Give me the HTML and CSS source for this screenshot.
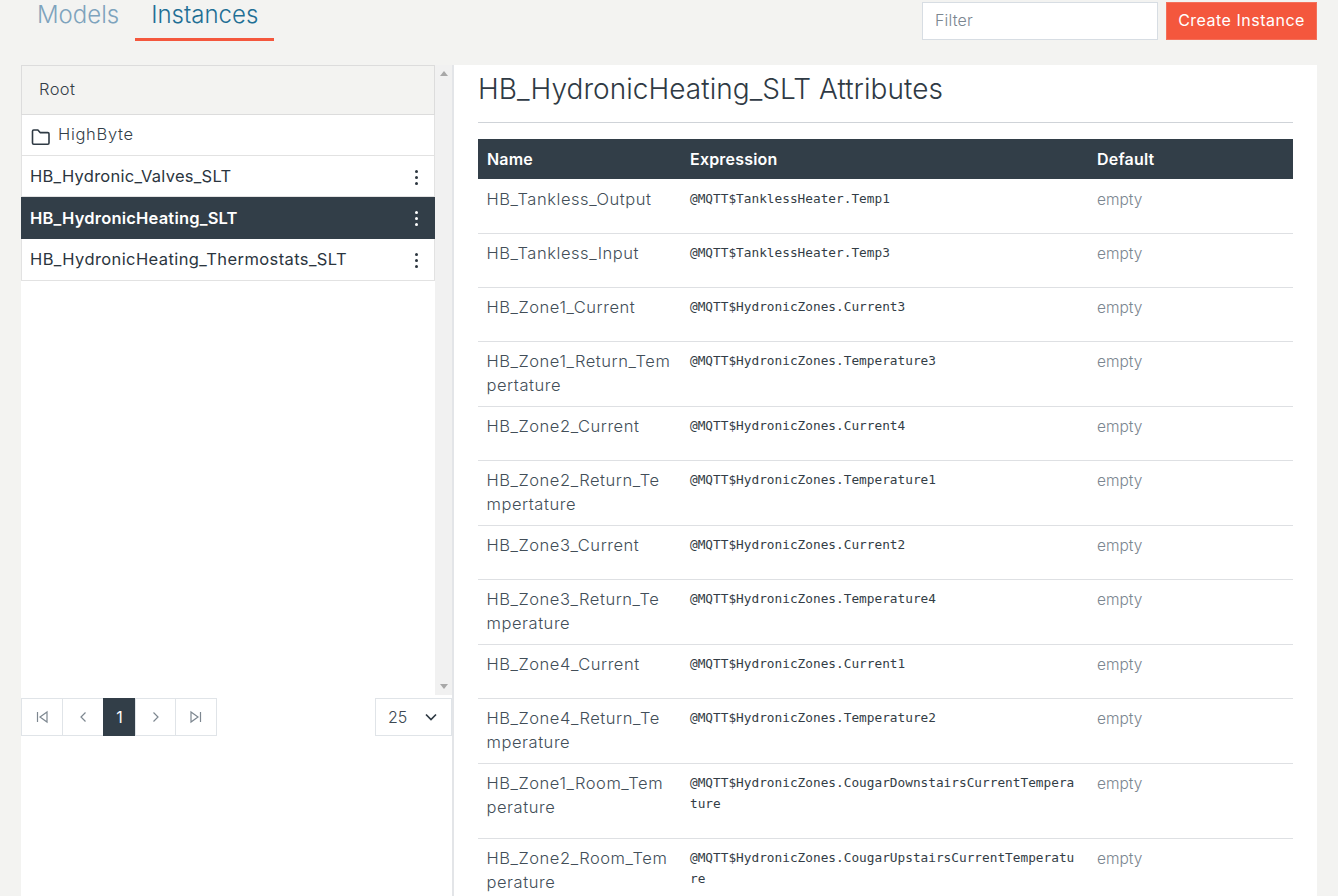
FILE: index.html
```html
<!DOCTYPE html>
<html lang="en">
<head>
<meta charset="utf-8">
<title>Instances</title>
<link rel="stylesheet" href="styles.css">
</head>
<body>
<div class="page">
  <header class="topbar">
    <nav class="tabs">
      <a class="tab">Models</a>
      <a class="tab tab-active">Instances</a>
    </nav>
    <div class="actions">
      <input class="filter" type="text" placeholder="Filter">
      <button class="create">Create Instance</button>
    </div>
  </header>
  <main class="content">
    <aside class="sidebar">
      <div class="tree-wrap">
        <div class="tree">
          <div class="tree-root">Root</div>
          <div class="tree-folder">
            <svg class="folder-icon" width="20" height="18" viewBox="0 0 20 18" fill="none" stroke="#2f3a44" stroke-width="1.6" stroke-linejoin="round"><path d="M1.5 15V3.2c0-.7.5-1.2 1.2-1.2h4.2l2.2 2.6h7.7c.7 0 1.2.5 1.2 1.2V15c0 .7-.5 1.2-1.2 1.2H2.7c-.7 0-1.2-.5-1.2-1.2z"/></svg>
            <span>HighByte</span>
          </div>
          <div class="tree-item"><span>HB_Hydronic_Valves_SLT</span><i class="kebab"><b></b><b></b><b></b></i></div>
          <div class="tree-item tree-item-active"><span>HB_HydronicHeating_SLT</span><i class="kebab"><b></b><b></b><b></b></i></div>
          <div class="tree-item tree-item-tall"><span>HB_HydronicHeating_Thermostats_SLT</span><i class="kebab"><b></b><b></b><b></b></i></div>
        </div>
        <div class="scrollbar"><span class="arrow-up"></span><span class="arrow-down"></span></div>
      </div>
      <div class="pager-row">
        <div class="pager">
          <span class="page-btn pb-wide"><svg width="14" height="14" viewBox="0 0 14 14" fill="none" stroke="#7d8790" stroke-width="1.2"><path d="M2.5 2v10M12 2 5 7l7 5z"/></svg></span>
          <span class="page-btn pb-wide"><svg width="10" height="12" viewBox="0 0 10 12" fill="none" stroke="#7d8790" stroke-width="1.2"><path d="M7.5 1.5 3 6l4.500 4.500"/></svg></span>
          <span class="page-btn page-current">1</span>
          <span class="page-btn pb-mid"><svg width="10" height="12" viewBox="0 0 10 12" fill="none" stroke="#7d8790" stroke-width="1.2"><path d="M2.500 1.500 7 6l-4.500 4.500"/></svg></span>
          <span class="page-btn pb-wide"><svg width="14" height="14" viewBox="0 0 14 14" fill="none" stroke="#7d8790" stroke-width="1.2"><path d="M11.500 2v10M2 2l7 5-7 5z"/></svg></span>
        </div>
        <div class="size-select"><span>25</span><svg width="12" height="8" viewBox="0 0 12 8" fill="none" stroke="#2f3a44" stroke-width="1.7"><path d="M1 1.500 6 6.500l5-5"/></svg></div>
      </div>
    </aside>
    <section class="detail">
      <h1 class="title">HB_HydronicHeating_SLT Attributes</h1>
      <hr class="rule">
      <table class="attrs">
        <colgroup><col class="c-name"><col class="c-expr"><col class="c-def"></colgroup>
        <thead><tr><th>Name</th><th>Expression</th><th>Default</th></tr></thead>
        <tbody>
          <tr><td class="name">HB_Tankless_Output</td><td class="expr">@MQTT$TanklessHeater.Temp1</td><td class="def">empty</td></tr>
          <tr><td class="name">HB_Tankless_Input</td><td class="expr">@MQTT$TanklessHeater.Temp3</td><td class="def">empty</td></tr>
          <tr><td class="name">HB_Zone1_Current</td><td class="expr">@MQTT$HydronicZones.Current3</td><td class="def">empty</td></tr>
          <tr><td class="name">HB_Zone1_Return_Tem<br>pertature</td><td class="expr">@MQTT$HydronicZones.Temperature3</td><td class="def">empty</td></tr>
          <tr><td class="name">HB_Zone2_Current</td><td class="expr">@MQTT$HydronicZones.Current4</td><td class="def">empty</td></tr>
          <tr><td class="name">HB_Zone2_Return_Te<br>mpertature</td><td class="expr">@MQTT$HydronicZones.Temperature1</td><td class="def">empty</td></tr>
          <tr><td class="name">HB_Zone3_Current</td><td class="expr">@MQTT$HydronicZones.Current2</td><td class="def">empty</td></tr>
          <tr><td class="name">HB_Zone3_Return_Te<br>mperature</td><td class="expr">@MQTT$HydronicZones.Temperature4</td><td class="def">empty</td></tr>
          <tr><td class="name">HB_Zone4_Current</td><td class="expr">@MQTT$HydronicZones.Current1</td><td class="def">empty</td></tr>
          <tr><td class="name">HB_Zone4_Return_Te<br>mperature</td><td class="expr">@MQTT$HydronicZones.Temperature2</td><td class="def">empty</td></tr>
          <tr><td class="name">HB_Zone1_Room_Tem<br>perature</td><td class="expr">@MQTT$HydronicZones.CougarDownstairsCurrentTemperature</td><td class="def">empty</td></tr>
          <tr><td class="name">HB_Zone2_Room_Tem<br>perature</td><td class="expr">@MQTT$HydronicZones.CougarUpstairsCurrentTemperature</td><td class="def">empty</td></tr>
        </tbody>
      </table>
    </section>
  </main>
</div>
</body>
</html>
```
FILE: styles.css
```css
* { box-sizing: border-box; }
html, body { margin: 0; padding: 0; height: 100%; overflow: hidden; }
body { background: #f3f3f1; color: #3c4852; font-family: Inter, "Noto Sans", sans-serif; font-weight: 300; }
.page { height: 896px; display: flex; flex-direction: column; padding: 0 21px; overflow: hidden; }

.topbar { height: 65px; flex: none; display: flex; justify-content: space-between; align-items: flex-start; }
.tabs { display: flex; }
.tab { height: 41px; padding: 0 16px; font-size: 24px; line-height: 30px; color: #7ea3bd; border-bottom: 3px solid transparent; }
.tab-active { color: #1f6f95; border-bottom-color: #f4573d; }
.actions { display: flex; gap: 8px; padding-top: 2px; }
.filter { width: 236px; height: 38px; border: 1px solid #d7dde3; background: #fff; padding: 0 12px 2px; font: 300 16px Inter, sans-serif; letter-spacing: .2px; color: #3c4852; }
.filter::placeholder { color: #7b8690; opacity: 1; }
.create { width: 151px; height: 38px; border: 1px solid #f4705a; background: #f4573d; color: #fff; font: 400 16px Inter, sans-serif; letter-spacing: .5px; padding: 0 0 2px; }

.content { flex: 1; display: flex; min-height: 0; }
.sidebar { width: 433px; flex: none; background: #fff; border-right: 2px solid #e3e5e8; display: flex; flex-direction: column; }
.tree-wrap { height: 630px; display: flex; flex: none; }
.tree { width: 414px; flex: none; }
.tree-root { height: 50px; background: #f3f3f1; border: 1px solid #dcdcdc; padding: 0 0 2px 17px; display: flex; align-items: center; font-size: 16.500px; letter-spacing: .4px; color: #333e48; }
.tree-folder { height: 41px; border: 1px solid #e2e2e2; border-top: 0; padding: 0 0 2px 9px; display: flex; align-items: center; gap: 7px; font-size: 16.500px; letter-spacing: .7px; color: #333e48; }
.folder-icon { flex: none; margin-top: 5px; }
.tree-item { height: 41px; border: 1px solid #e2e2e2; border-top: 0; padding: 0 16px 0 8px; display: flex; align-items: center; justify-content: space-between; font-size: 16.500px; font-weight: 400; letter-spacing: .27px; color: #2b353e; }
.tree-item-tall { height: 42px; padding-bottom: 2px; letter-spacing: .4px; }
.tree-item-active { height: 42px; background: #323e48; border-color: #323e48; color: #fff; font-weight: 600; letter-spacing: .2px; }
.kebab { display: flex; flex-direction: column; gap: 3px; margin-top: 2px; }
.tree-item-tall .kebab { margin-top: 4px; }
.kebab b { width: 3px; height: 3px; border-radius: 50%; background: #2b353e; display: block; }
.tree-item-active .kebab b { background: #fff; }
.scrollbar { flex: 1; background: #f1f1f1; display: flex; flex-direction: column; justify-content: space-between; align-items: center; padding: 6px 0; }
.arrow-up { border: 4px solid transparent; border-top: 0; border-bottom: 5px solid #a8a8a8; }
.arrow-down { border: 4px solid transparent; border-bottom: 0; border-top: 5px solid #a8a8a8; }

.pager-row { margin-top: 3px; display: flex; justify-content: space-between; align-items: flex-start; }
.pager { display: flex; height: 38px; }
.page-btn { height: 38px; border: 1px solid #e0e4e8; margin-left: -1px; display: flex; align-items: center; justify-content: center; background: #fff; font-size: 16px; }
.page-btn:first-child { margin-left: 0; }
.pb-wide { width: 42px; }
.pb-mid { width: 41px; }
.page-current { width: 33px; background: #323e48; border-color: #323e48; color: #fff; font-weight: 400; }
.size-select { width: 77px; height: 38px; border: 1px solid #e0e4e8; display: flex; align-items: center; justify-content: space-between; padding: 0 14px 0 12px; font-size: 16px; background: #fff; }

.detail { flex: 1; min-width: 0; background: #fff; padding: 0 24px; overflow: hidden; }
.title { margin: 0; padding-top: 7px; height: 57px; font-size: 28px; line-height: 35px; font-weight: 300; letter-spacing: .05px; color: #2f3a44; }
.rule { margin: 0 0 16px; border: 0; border-top: 1px solid #cfd3d8; }
.attrs { width: 815px; table-layout: fixed; border-collapse: collapse; font-size: 16.500px; letter-spacing: .55px; }
.c-name { width: 203px; }
.c-expr { width: 407px; }
.c-def { width: 205px; }
.attrs th { height: 40px; background: #323e48; color: #fff; font-weight: 600; text-align: left; padding: 0 0 1px 9px; font-size: 16px; letter-spacing: .2px; }
.attrs td { vertical-align: top; padding: 8px 0 8px 9px; border-bottom: 1px solid #dee0e3; }
.attrs tbody tr:first-child td { padding-top: 9px; }
.name { line-height: 22px; color: #424e58; white-space: nowrap; }
.name br { line-height: 24px; }
.attrs td.name { padding-top: 8px; padding-left: 8.500px; line-height: 24px; }
.attrs tbody tr:first-child td.name { padding-top: 8px; padding-bottom: 9px; }
.attrs tbody tr:not(:first-child) td.name { padding-top: 7px; padding-bottom: 9px; }
.attrs td.expr { font-family: "DejaVu Sans Mono", monospace; font-size: 12.780px; line-height: 21px; font-weight: 400; letter-spacing: 0; color: #333d46; word-break: break-all; padding-right: 9px; padding-bottom: 24px; }
.def { line-height: 24px; color: #7b8690; font-size: 15.500px; letter-spacing: 0; }
```
